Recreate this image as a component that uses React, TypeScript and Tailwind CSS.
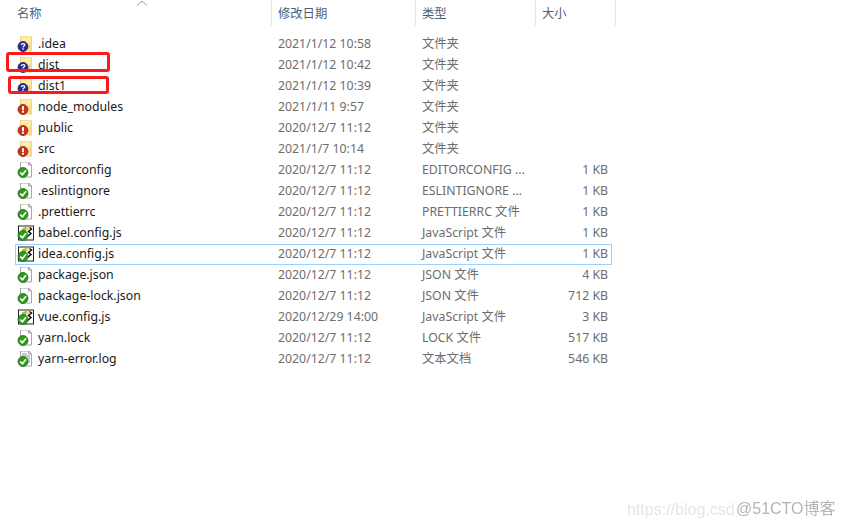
type Badge = "question" | "error" | "ok";
type Kind = "folder" | "file" | "script" | "text";

type Row = {
  name: string;
  date: string;
  type: string;
  size?: string;
  kind: Kind;
  badge: Badge;
  selected?: boolean;
};

const rows: Row[] = [
  { name: ".idea", date: "2021/1/12 10:58", type: "文件夹", kind: "folder", badge: "question" },
  { name: "dist", date: "2021/1/12 10:42", type: "文件夹", kind: "folder", badge: "question" },
  { name: "dist1", date: "2021/1/12 10:39", type: "文件夹", kind: "folder", badge: "question" },
  { name: "node_modules", date: "2021/1/11 9:57", type: "文件夹", kind: "folder", badge: "error" },
  { name: "public", date: "2020/12/7 11:12", type: "文件夹", kind: "folder", badge: "error" },
  { name: "src", date: "2021/1/7 10:14", type: "文件夹", kind: "folder", badge: "error" },
  { name: ".editorconfig", date: "2020/12/7 11:12", type: "EDITORCONFIG ...", size: "1 KB", kind: "file", badge: "ok" },
  { name: ".eslintignore", date: "2020/12/7 11:12", type: "ESLINTIGNORE ...", size: "1 KB", kind: "file", badge: "ok" },
  { name: ".prettierrc", date: "2020/12/7 11:12", type: "PRETTIERRC 文件", size: "1 KB", kind: "file", badge: "ok" },
  { name: "babel.config.js", date: "2020/12/7 11:12", type: "JavaScript 文件", size: "1 KB", kind: "script", badge: "ok" },
  { name: "idea.config.js", date: "2020/12/7 11:12", type: "JavaScript 文件", size: "1 KB", kind: "script", badge: "ok", selected: true },
  { name: "package.json", date: "2020/12/7 11:12", type: "JSON 文件", size: "4 KB", kind: "file", badge: "ok" },
  { name: "package-lock.json", date: "2020/12/7 11:12", type: "JSON 文件", size: "712 KB", kind: "file", badge: "ok" },
  { name: "vue.config.js", date: "2020/12/29 14:00", type: "JavaScript 文件", size: "3 KB", kind: "script", badge: "ok" },
  { name: "yarn.lock", date: "2020/12/7 11:12", type: "LOCK 文件", size: "517 KB", kind: "file", badge: "ok" },
  { name: "yarn-error.log", date: "2020/12/7 11:12", type: "文本文档", size: "546 KB", kind: "text", badge: "ok" },
];

function BaseIcon({ kind }: { kind: Kind }) {
  if (kind === "folder") {
    return (
      <>
        <path d="M3.500 1.500h10l1 1v14h-11z" fill="#ffeda6" stroke="#eed283" />
        <path d="M12 8h3v9h-3z" fill="#f7d988" />
      </>
    );
  }
  if (kind === "script") {
    return (
      <>
        <rect x="1.500" y="2.500" width="15" height="14" fill="#fff" stroke="#222" />
        <path d="M5 5l5-2 1 2-4 5-2-1z" fill="#9cc04a" />
        <path d="M9 4h3v2H9z" fill="#f2e04c" />
        <path d="M12.500 4l2 1.500-3 2.500 2.500 2-3.500 3" fill="none" stroke="#111" strokeWidth="1.500" />
      </>
    );
  }
  return (
    <>
      <path d="M3.500 1.500h8l3 3v12h-11z" fill="#fff" stroke="#a8a8a8" />
      <path d="M11.500 1.500v3h3z" fill="#e4e4e4" stroke="#a8a8a8" />
      {kind === "text" && (
        <path d="M5 4.500h5M5 6.500h8M5 8.500h8M8 10.500h5M9 12.500h4" stroke="#8a9aae" strokeWidth="1" />
      )}
    </>
  );
}

function BadgeIcon({ badge }: { badge: Badge }) {
  if (badge === "question") {
    return (
      <>
        <circle cx="6" cy="12" r="5" fill="#2b2b8f" stroke="#16165e" strokeWidth="0.800" />
        <path d="M4.300 10.500c.2-1.900 3.500-1.900 3.400-.1 0 1.100-1.700 1.200-1.700 2.500" fill="none" stroke="#fff" strokeWidth="1.300" />
        <rect x="5.300" y="13.700" width="1.400" height="1.400" fill="#fff" />
      </>
    );
  }
  if (badge === "error") {
    return (
      <>
        <circle cx="6" cy="12" r="5" fill="#c8321e" stroke="#97220f" strokeWidth="0.800" />
        <rect x="5" y="8.700" width="2" height="4" fill="#fff" />
        <rect x="5" y="13.500" width="2" height="1.700" fill="#fff" />
      </>
    );
  }
  return (
    <>
      <circle cx="6" cy="12" r="5" fill="#2e9a1c" stroke="#1d6e10" strokeWidth="0.800" />
      <path d="M3.200 12l2.200 2.300 3.600-4.600" fill="none" stroke="#fff" strokeWidth="1.700" />
    </>
  );
}

function FileIcon({ kind, badge }: { kind: Kind; badge: Badge }) {
  return (
    <svg width="18" height="18" viewBox="0 1.500 18 18" className="shrink-0">
      <BaseIcon kind={kind} />
      <BadgeIcon badge={badge} />
    </svg>
  );
}

function HeaderCell({ label, className }: { label: string; className: string }) {
  return (
    <div className={`h-[26px] border-r border-[#e5e5e5] text-[#4c607a] leading-[27px] ${className}`}>
      {label}
    </div>
  );
}

export default function App() {
  return (
    <div className="relative w-[844px] h-[527px] overflow-hidden bg-white text-[12.3px] font-['Noto_Sans','Noto_Sans_CJK_SC',sans-serif]">
      <svg width="12" height="6" viewBox="0 0 12 6" className="absolute left-[136px] top-0">
        <path d="M1 5.500L6 1l5 4.500" fill="none" stroke="#9a9a9a" />
      </svg>

      <div className="flex">
        <HeaderCell label="名称" className="w-[272px] pl-[17px]" />
        <HeaderCell label="修改日期" className="w-[144px] pl-[6px]" />
        <HeaderCell label="类型" className="w-[120px] pl-[6px]" />
        <HeaderCell label="大小" className="w-[80px] pl-[6px]" />
      </div>

      <div className="mt-[8px] ml-[15px] w-[597px]">
        {rows.map((row) => (
          <div
            key={row.name}
            className={`flex items-center h-[21px] border ${row.selected ? "border-[#99d1ff]" : "border-transparent"}`}
          >
            <div className="flex items-center w-[256px] pl-[1px] gap-[3px] text-[#1a1a1a]">
              <FileIcon kind={row.kind} badge={row.badge} />
              <span>{row.name}</span>
            </div>
            <div className="w-[144px] pl-[6px] text-[#6d6d6d]">{row.date}</div>
            <div className="w-[120px] pl-[6px] text-[#6d6d6d] whitespace-nowrap">{row.type}</div>
            <div className="w-[72px] text-right text-[#6d6d6d]">{row.size}</div>
          </div>
        ))}
      </div>

      <div className="absolute left-[6px] top-[52px] w-[104px] h-[20px] border-[3px] border-[#fb1a1a] rounded-[3px]" />
      <div className="absolute left-[8px] top-[76px] w-[101px] h-[18px] border-[3px] border-[#fb1a1a] rounded-[3px]" />

      <div className="absolute left-[627px] top-[498px] text-[16px] text-[#e6e6e6] font-['Liberation_Sans',sans-serif] whitespace-nowrap blur-[0.4px]">
        https://blog.csd
      </div>
      <div className="absolute left-[736px] top-[497px] text-[16px] text-[#b4b4b4] font-['Liberation_Sans','Noto_Sans_CJK_SC',sans-serif] whitespace-nowrap blur-[0.4px]">
        @51CTO博客
      </div>
    </div>
  );
}
